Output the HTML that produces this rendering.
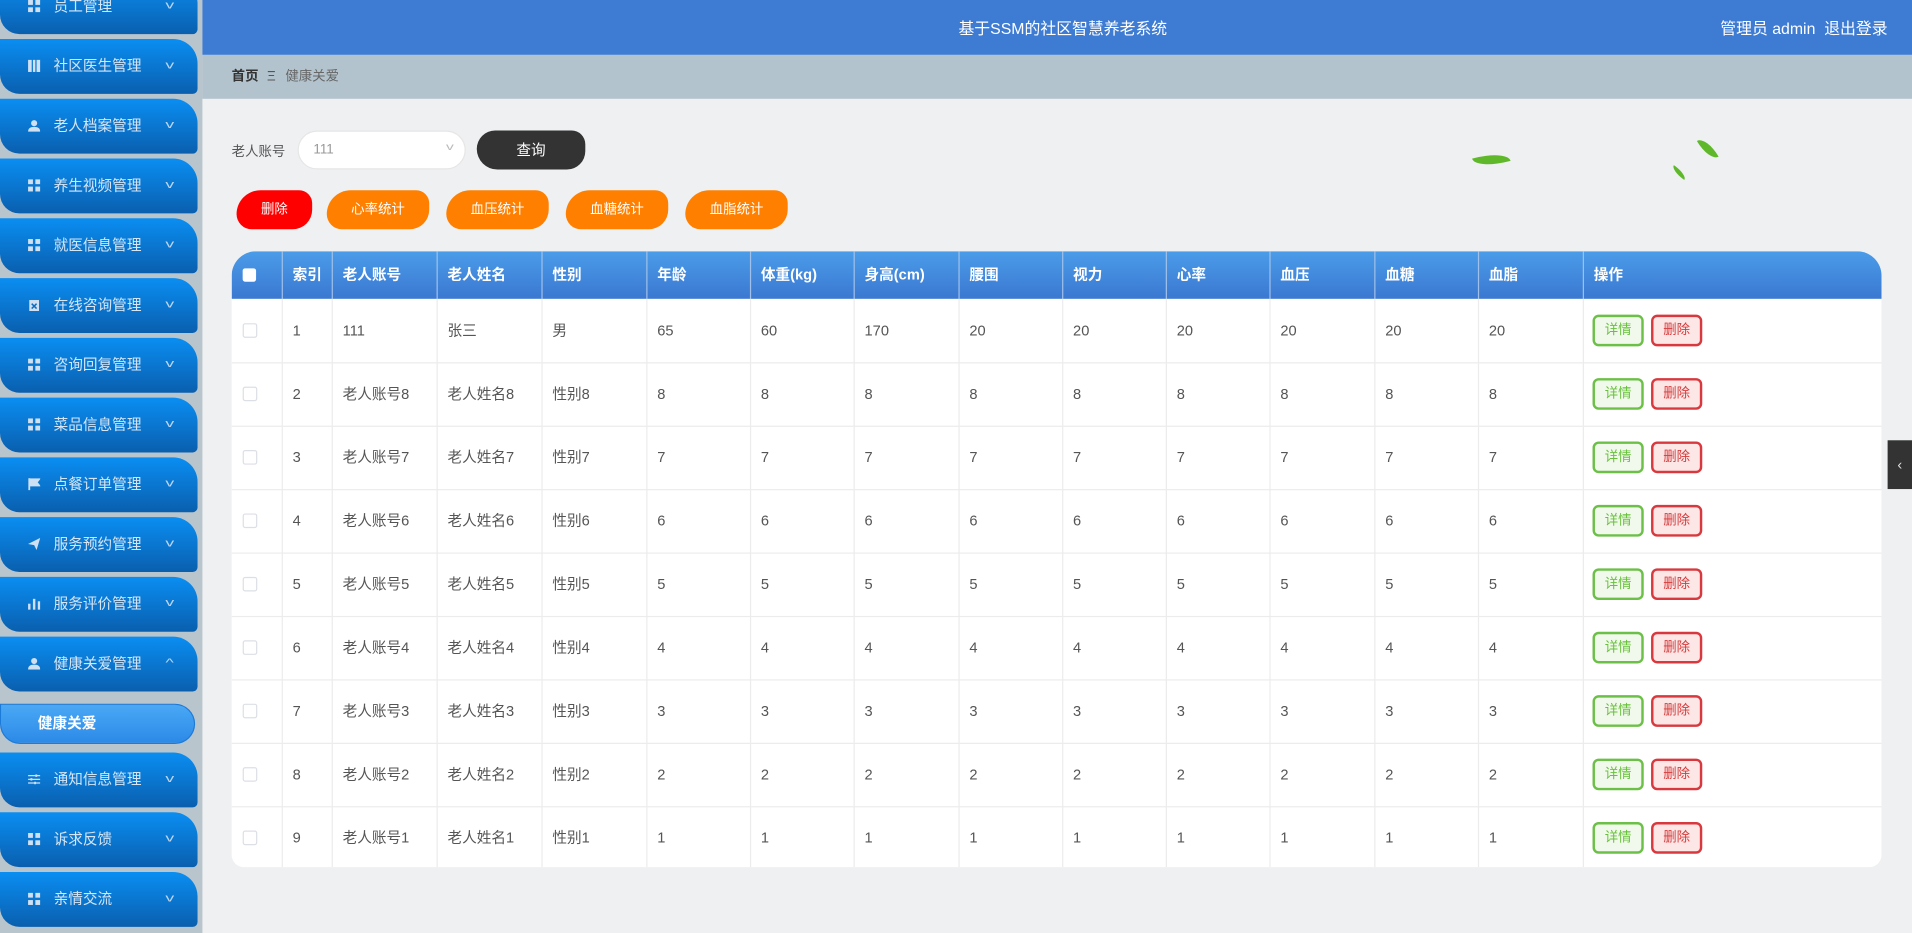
<!DOCTYPE html>
<html><head><meta charset="utf-8">
<style>
*{margin:0;padding:0;box-sizing:border-box}
html,body{width:1912px;height:933px;overflow:hidden;background:#eef0f2}
body{font-family:"Liberation Sans","Noto Sans CJK SC",sans-serif}
#w{position:absolute;left:0;top:0;width:1568px;height:765px;transform:scale(1.219388,1.219608);transform-origin:0 0;background:#eef0f2;overflow:hidden}
.side{position:absolute;left:0;top:0;width:166px;height:765px;background:#b9c5cc}
.it{position:absolute;left:0;width:162px;height:45px;border-radius:0 20px 4px 16px;background:linear-gradient(#0a8ef2,#0a5fae);color:#d6e6f5;font-size:12px;line-height:45px}
.it .ic{position:absolute;left:23px;top:17px;width:10px;height:10px}
.it .tx{position:absolute;left:44px}
.it .ch{position:absolute;left:137px;top:-1px;font-size:9px;color:#bcd6f0;transform:scaleX(1.6)}
.sub{position:absolute;left:0;top:577px;width:160px;height:33px;border-radius:0 17px 17px 17px;background:linear-gradient(#4aa8f5,#2c8ae8);border:1px solid #1d7bd8;color:#fff;font-size:12px;font-weight:bold;line-height:31px;padding-left:30px}
.hd{position:absolute;left:166px;top:0;width:1402px;height:45px;background:#3e7bd3;color:#fff;font-size:13px}
.bc{position:absolute;left:166px;top:45px;width:1402px;height:36px;background:#b3c3cd;font-size:11px;line-height:36px}
.tbl{position:absolute;left:190px;top:206px;width:1353px;height:505px;background:#fff;border-radius:20px 20px 10px 10px;overflow:hidden}
.th{position:absolute;left:0;top:0;width:1353px;height:39px;background:linear-gradient(#4a9ce9,#3b78d1)}
.c{position:absolute;font-size:12px;color:#555;line-height:52px;padding-left:9px}
.h{color:#fff;font-weight:bold;line-height:39px}
.vl{position:absolute;top:0;width:1px;height:505px;background:#ececec}
.vh{position:absolute;top:0;width:1px;height:39px;background:#a9c6ee}
.hl{position:absolute;left:0;width:1353px;height:1px;background:#ececec}
.b1,.b2{position:absolute;width:42px;height:26px;border:2px solid;border-radius:5px;font-size:11px;text-align:center;line-height:22px}
.b1{border-color:#6cc047;background:#f0f9eb;color:#67c23a}
.b2{border-color:#d8393e;background:#fde6e6;color:#d43c3c}
.cb{position:absolute;left:9px;width:12px;height:12px;border:1px solid #dcdfe6;border-radius:2px;background:#fff}
.ob{position:absolute;top:156px;height:32px;color:#fff;font-size:11px;text-align:center;line-height:32px;border-radius:22px 12px 18px 14px}
.leaf{position:absolute;background:#5fb82a;border-radius:0 100% 0 100%}
</style></head><body><div id="w">
<div class="side">
<div class="it" style="top:-17px"><svg class="ic" viewBox="0 0 10 10"><rect x="0" y="0" width="4" height="4" fill="#cfe0f2"/><rect x="6" y="0" width="4" height="4" fill="#cfe0f2"/><rect x="0" y="6" width="4" height="4" fill="#cfe0f2"/><rect x="6" y="6" width="4" height="4" fill="#cfe0f2"/></svg><span class="tx">员工管理</span><span class="ch">v</span></div>
<div class="it" style="top:32px"><svg class="ic" viewBox="0 0 10 10"><rect x="0" y="0" width="3" height="10" fill="#cfe0f2"/><rect x="4" y="0" width="2" height="10" fill="#cfe0f2"/><path d="M7 0h3v10H7z" fill="#cfe0f2"/></svg><span class="tx">社区医生管理</span><span class="ch">v</span></div>
<div class="it" style="top:81px"><svg class="ic" viewBox="0 0 10 10"><circle cx="5" cy="3" r="2.5" fill="#cfe0f2"/><path d="M0 10Q0 6 5 6Q10 6 10 10Z" fill="#cfe0f2"/></svg><span class="tx">老人档案管理</span><span class="ch">v</span></div>
<div class="it" style="top:130px"><svg class="ic" viewBox="0 0 10 10"><rect x="0" y="0" width="4" height="4" fill="#cfe0f2"/><rect x="6" y="0" width="4" height="4" fill="#cfe0f2"/><rect x="0" y="6" width="4" height="4" fill="#cfe0f2"/><rect x="6" y="6" width="4" height="4" fill="#cfe0f2"/></svg><span class="tx">养生视频管理</span><span class="ch">v</span></div>
<div class="it" style="top:179px"><svg class="ic" viewBox="0 0 10 10"><rect x="0" y="0" width="4" height="4" fill="#cfe0f2"/><rect x="6" y="0" width="4" height="4" fill="#cfe0f2"/><rect x="0" y="6" width="4" height="4" fill="#cfe0f2"/><rect x="6" y="6" width="4" height="4" fill="#cfe0f2"/></svg><span class="tx">就医信息管理</span><span class="ch">v</span></div>
<div class="it" style="top:228px"><svg class="ic" viewBox="0 0 10 10"><rect x="1" y="1" width="8" height="9" fill="#cfe0f2"/><path d="M3 4l4 4M7 4l-4 4" stroke="#0a6fc4" stroke-width="1.2"/></svg><span class="tx">在线咨询管理</span><span class="ch">v</span></div>
<div class="it" style="top:277px"><svg class="ic" viewBox="0 0 10 10"><rect x="0" y="0" width="4" height="4" fill="#cfe0f2"/><rect x="6" y="0" width="4" height="4" fill="#cfe0f2"/><rect x="0" y="6" width="4" height="4" fill="#cfe0f2"/><rect x="6" y="6" width="4" height="4" fill="#cfe0f2"/></svg><span class="tx">咨询回复管理</span><span class="ch">v</span></div>
<div class="it" style="top:326px"><svg class="ic" viewBox="0 0 10 10"><rect x="0" y="0" width="4" height="4" fill="#cfe0f2"/><rect x="6" y="0" width="4" height="4" fill="#cfe0f2"/><rect x="0" y="6" width="4" height="4" fill="#cfe0f2"/><rect x="6" y="6" width="4" height="4" fill="#cfe0f2"/></svg><span class="tx">菜品信息管理</span><span class="ch">v</span></div>
<div class="it" style="top:375px"><svg class="ic" viewBox="0 0 10 10"><path d="M1 0v10M1 1h8l-2 2.5 2 2.5H1" stroke="#cfe0f2" stroke-width="1.5" fill="#cfe0f2"/></svg><span class="tx">点餐订单管理</span><span class="ch">v</span></div>
<div class="it" style="top:424px"><svg class="ic" viewBox="0 0 10 10"><path d="M0 5L10 0 7 10 5 6Z" fill="#cfe0f2"/></svg><span class="tx">服务预约管理</span><span class="ch">v</span></div>
<div class="it" style="top:473px"><svg class="ic" viewBox="0 0 10 10"><rect x="0" y="5" width="2" height="5" fill="#cfe0f2"/><rect x="4" y="1" width="2" height="9" fill="#cfe0f2"/><rect x="8" y="3" width="2" height="7" fill="#cfe0f2"/></svg><span class="tx">服务评价管理</span><span class="ch">v</span></div>
<div class="it" style="top:522px"><svg class="ic" viewBox="0 0 10 10"><circle cx="5" cy="3" r="2.5" fill="#cfe0f2"/><path d="M0 10Q0 6 5 6Q10 6 10 10Z" fill="#cfe0f2"/></svg><span class="tx">健康关爱管理</span><span class="ch">^</span></div>
<div class="sub">健康关爱</div>
<div class="it" style="top:617px"><svg class="ic" viewBox="0 0 10 10"><path d="M0 2h10M0 5h10M0 8h10" stroke="#cfe0f2" stroke-width="1"/><rect x="6" y="1" width="1.5" height="2" fill="#cfe0f2"/><rect x="2" y="4" width="1.5" height="2" fill="#cfe0f2"/><rect x="5" y="7" width="1.5" height="2" fill="#cfe0f2"/></svg><span class="tx">通知信息管理</span><span class="ch">v</span></div>
<div class="it" style="top:666px"><svg class="ic" viewBox="0 0 10 10"><rect x="0" y="0" width="4" height="4" fill="#cfe0f2"/><rect x="6" y="0" width="4" height="4" fill="#cfe0f2"/><rect x="0" y="6" width="4" height="4" fill="#cfe0f2"/><rect x="6" y="6" width="4" height="4" fill="#cfe0f2"/></svg><span class="tx">诉求反馈</span><span class="ch">v</span></div>
<div class="it" style="top:715px"><svg class="ic" viewBox="0 0 10 10"><rect x="0" y="0" width="4" height="4" fill="#cfe0f2"/><rect x="6" y="0" width="4" height="4" fill="#cfe0f2"/><rect x="0" y="6" width="4" height="4" fill="#cfe0f2"/><rect x="6" y="6" width="4" height="4" fill="#cfe0f2"/></svg><span class="tx">亲情交流</span><span class="ch">v</span></div>
</div>
<div class="hd"><span style="position:absolute;left:620px;top:13px">基于SSM的社区智慧养老系统</span><span style="position:absolute;right:20px;top:13px">管理员 admin&nbsp;&nbsp;退出登录</span></div>
<div class="bc"><span style="position:absolute;left:24px;font-weight:bold;color:#333">首页</span><span style="position:absolute;left:53px;color:#555">Ξ</span><span style="position:absolute;left:68px;color:#666">健康关爱</span></div>
<div class="leaf" style="left:1208px;top:126px;width:30px;height:10px;transform:rotate(-15deg)"></div>
<div class="leaf" style="left:1396px;top:112px;width:9px;height:20px;transform:rotate(-30deg)"></div>
<div class="leaf" style="left:1370px;top:139px;width:14px;height:5px;transform:rotate(35deg)"></div>
<span style="position:absolute;left:190px;top:116px;font-size:11px;color:#555">老人账号</span>
<div style="position:absolute;left:244px;top:107px;width:138px;height:32px;background:#fff;border:1px solid #e6e6e6;border-radius:16px;font-size:11px;color:#999;line-height:30px;padding-left:12px">111<span style="position:absolute;right:10px;top:-2px;color:#bbb;font-size:8px;transform:scaleX(1.6)">v</span></div>
<div style="position:absolute;left:391px;top:107px;width:89px;height:32px;background:#333;border-radius:16px 12px 16px 18px;color:#fff;font-size:12px;text-align:center;line-height:32px">查询</div>
<div class="ob" style="left:194px;width:62px;background:#ff0000">删除</div>
<div class="ob" style="left:268px;width:84px;background:#ff8000">心率统计</div>
<div class="ob" style="left:366px;width:84px;background:#ff8000">血压统计</div>
<div class="ob" style="left:464px;width:84px;background:#ff8000">血糖统计</div>
<div class="ob" style="left:562px;width:84px;background:#ff8000">血脂统计</div>
<div class="tbl">
<div class="th"></div>
<div style="position:absolute;left:9px;top:14px;width:11px;height:11px;background:#fff;border-radius:2px"></div>
<div id="cells"></div>
<script>
var xs=[0,41,82,168,254,340,425,510,596,681,766,851,937,1022,1108];
var hdr=["","索引","老人账号","老人姓名","性别","年龄","体重(kg)","身高(cm)","腰围","视力","心率","血压","血糖","血脂","操作"];
var h="";
for(var i=1;i<xs.length;i++){h+='<div class="vh" style="left:'+xs[i]+'px;background:#9fc0ea"></div><div class="vl" style="left:'+xs[i]+'px;top:39px;height:466px"></div>';}
for(var i=1;i<hdr.length;i++)h+='<div class="c h" style="left:'+xs[i]+'px;top:0">'+hdr[i]+'</div>';
var rows=[["1","111","张三","男","65","60","170","20","20","20","20","20","20"]];
for(var n=8;n>=1;n--){rows.push([String(9-n+1),"老人账号"+n,"老人姓名"+n,"性别"+n,n,n,n,n,n,n,n,n,n]);}
for(var r=0;r<9;r++){var y=39+r*52;
 if(r>0)h+='<div class="hl" style="top:'+y+'px"></div>';
 h+='<div class="cb" style="top:'+(y+20)+'px"></div>';
 for(var k=0;k<13;k++)h+='<div class="c" style="left:'+xs[k+1]+'px;top:'+y+'px">'+rows[r][k]+'</div>';
 h+='<div class="b1" style="left:1116px;top:'+(y+13)+'px">详情</div><div class="b2" style="left:1164px;top:'+(y+13)+'px">删除</div>';}
document.getElementById("cells").innerHTML=h;
</script>
</div>
<div style="position:absolute;left:1548px;top:361px;width:20px;height:40px;background:#333;color:#ddd;font-size:12px;text-align:center;line-height:40px">‹</div>
</div></body></html>
